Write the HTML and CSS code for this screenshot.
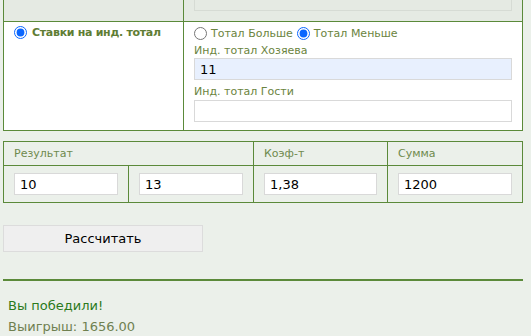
FILE: index.html
```html
<!DOCTYPE html>
<html lang="ru">
<head>
<meta charset="utf-8">
<link rel="stylesheet" href="styles.css">
</head>
<body>
<div class="page">
  <table class="bets">
    <tr class="prev-row">
      <td class="c-left"></td>
      <td class="c-right"><input class="field field-disabled" type="text" disabled></td>
    </tr>
    <tr class="main-row">
      <td class="c-left">
        <label class="opt-main"><input type="radio" name="bet" checked> Ставки на инд. тотал</label>
      </td>
      <td class="c-right">
        <div class="radios">
          <label class="opt"><input type="radio" name="tt"> Тотал Больше</label>
          <label class="opt"><input type="radio" name="tt" checked> Тотал Меньше</label>
        </div>
        <div class="lbl">Инд. тотал Хозяева</div>
        <input class="field field-auto" type="text" value="11">
        <div class="lbl lbl-2">Инд. тотал Гости</div>
        <input class="field" type="text" value="">
      </td>
    </tr>
  </table>

  <table class="calc">
    <tr class="head">
      <th colspan="2">Результат</th>
      <th class="w-coef">Коэф-т</th>
      <th class="w-sum">Сумма</th>
    </tr>
    <tr class="body">
      <td><input class="field" type="text" value="10"></td>
      <td><input class="field" type="text" value="13"></td>
      <td><input class="field" type="text" value="1,38"></td>
      <td><input class="field" type="text" value="1200"></td>
    </tr>
  </table>

  <button class="btn" type="button">Рассчитать</button>

  <hr class="sep">

  <div class="result">
    <div class="win">Вы победили!</div>
    <div class="prize">Выигрыш: 1656.00</div>
  </div>
</div>
</body>
</html>
```

FILE: styles.css
```css
html, body {
  margin: 0;
  padding: 0;
  background: #ebf0ea;
  font-family: "DejaVu Sans", Verdana, sans-serif;
}
.page {
  padding: 0 8px 0 3px;
  overflow: hidden;
  height: 336px;
}
table {
  border-collapse: collapse;
  width: 520px;
}
.bets {
  margin-top: -20px;
  border: 1px solid #5b8a3a;
}
.bets td {
  border: 1px solid #5b8a3a;
  vertical-align: top;
}
.c-left {
  width: 159px;
  padding: 4px 10px;
}
.c-right {
  padding: 5px 10px 8px 10px;
}
.prev-row td {
  background: #e5eae3;
  height: 27px;
  padding-top: 8px;
  padding-bottom: 5px;
}
.main-row td {
  background: #fff;
}
.field {
  box-sizing: border-box;
  display: block;
  width: 100%;
  height: 22px;
  margin: 0;
  padding: 0 5px;
  border: 1px solid #d9d9d9;
  background: #fff;
  font-family: "DejaVu Sans", Verdana, sans-serif;
  font-size: 13px;
  color: #000;
  outline: none;
}
.field-disabled {
  background: #e5eae3;
  border-color: #d6dbd4;
}
.field-auto {
  background: #e8f0fe;
}
.opt-main {
  display: flex;
  align-items: center;
  gap: 5px;
  font-size: 11px;
  font-weight: bold;
  letter-spacing: -0.3px;
  color: #5f7d34;
}
.opt-main input, .opt input {
  margin: 0;
  width: 13px;
  height: 13px;
  accent-color: #0a66ff;
}
.radios {
  display: flex;
  gap: 4px;
  font-size: 11px;
  color: #6b8440;
}
.opt {
  display: flex;
  align-items: center;
  gap: 4px;
}
.lbl {
  font-size: 11px;
  color: #6b8440;
  margin: 4px 0 1px;
  line-height: 13px;
}
.lbl-2 {
  margin: 5px 0 2px;
}
.calc {
  margin-top: 10px;
  border: 1px solid #5b8a3a;
}
.calc th, .calc td {
  border: 1px solid #5b8a3a;
  text-align: left;
}
.calc th {
  font-weight: normal;
  font-size: 11px;
  color: #6f8a4e;
  padding: 0 10px;
  height: 23px;
}
.calc td {
  padding: 7px 10px 7px;
}
.w-coef { width: 113px; }
.w-sum { width: 114px; }
.btn {
  display: block;
  margin-top: 22px;
  width: 200px;
  height: 27px;
  padding: 0;
  background: #efefef;
  border: 1px solid #dcdcdc;
  font-family: "DejaVu Sans", Verdana, sans-serif;
  font-size: 13px;
  color: #000;
}
.sep {
  margin: 27px 0 0;
  width: 520px;
  height: 2px;
  border: none;
  background: #5b8a3a;
}
.result {
  padding: 14px 5px 0;
  font-size: 13px;
  line-height: 21px;
}
.win { color: #2b7a1c; }
.prize { color: #6f8050; }
```
